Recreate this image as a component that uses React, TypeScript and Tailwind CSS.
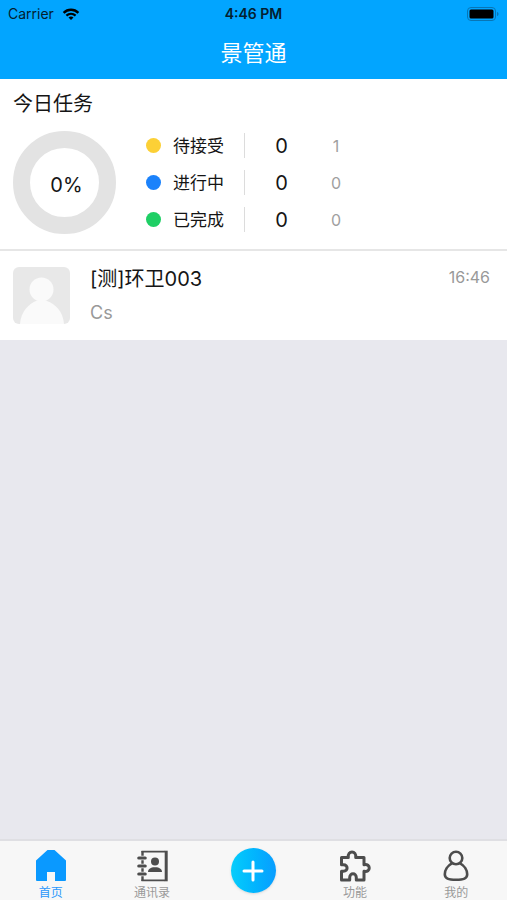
import type { ReactNode } from "react"

type taskType = {
    label: string
    dot: string
    count: number
    total: number
}

const tasks: taskType[] = [
    { label: "待接受", dot: "bg-[#fcd036]", count: 0, total: 1 },
    { label: "进行中", dot: "bg-[#1b82fb]", count: 0, total: 0 },
    { label: "已完成", dot: "bg-[#1fcf65]", count: 0, total: 0 },
]

const HomeIcon = () => (
    <svg viewBox="0 0 32 32" className="size-8" aria-hidden="true">
        <path d="M12.500 0h7L31 10.500V30q0 1-1 1H20v-9h-8v9H2q-1 0-1-1V10.500z" fill="#0a99ff" />
    </svg>
)

const ContactsIcon = () => (
    <svg viewBox="0 0 32 32" className="size-8" aria-hidden="true">
        <path d="M5.500 1.600H29M5.500 30.400H29" stroke="#4d4d4d" strokeWidth="1.800" />
        <path d="M30.200 .7v30.600" stroke="#4d4d4d" strokeWidth="3" />
        <path d="M6.500 1v30" stroke="#4d4d4d" strokeWidth="2.400" />
        <path d="M2.500 8h7M2.500 16h7M2.500 24h7" stroke="#f7f7f7" strokeWidth="4.600" />
        <path d="M2.800 8h6.400M2.800 16h6.400M2.800 24h6.400" stroke="#4d4d4d" strokeWidth="3.200" strokeLinecap="round" />
        <circle cx="19" cy="11.500" r="4" fill="#4d4d4d" />
        <path d="M12 22c0-3.200 2.700-4.200 5-4.800h4c2.300.6 5 1.600 5 4.800z" fill="#4d4d4d" />
    </svg>
)

const PuzzleIcon = () => (
    <svg viewBox="0 0 32 32" className="size-8" aria-hidden="true">
        <path
            d="M2.500 7.500h6.800c-1.200-7.400 8.600-7.400 7.400 0h8.300v7.200c7-1.600 7 8.200 0 6.600v8.700h-7.700v-2.500c0-5-6.600-5-6.600 0v2.500H2.500v-8.700h2c4.800 0 4.800-6.600 0-6.600h-2z"
            fill="none"
            stroke="#4d4d4d"
            strokeWidth="3"
            strokeLinejoin="round"
        />
    </svg>
)

const MineIcon = () => (
    <svg viewBox="0 0 32 32" className="size-8" aria-hidden="true">
        <circle cx="16" cy="8" r="6.300" fill="none" stroke="#4d4d4d" strokeWidth="2.600" />
        <path
            d="M12.300 13.200C7.300 15.700 4.800 20.500 4.800 24.300c0 4.300 3.500 5.500 11.200 5.500s11.200-1.200 11.200-5.500c0-3.800-2.500-8.600-7.500-11.100"
            fill="none"
            stroke="#4d4d4d"
            strokeWidth="2.600"
        />
    </svg>
)

const StatusBar = () => {
    return (
        <div className="grid h-7 grid-cols-3 items-center px-2 text-sm text-[#04202f]">
            <span className="flex items-center gap-2">
                Carrier
                <svg viewBox="0 0 18 13" className="h-3 w-[18px]" aria-label="Wi-Fi">
                    <path d="M1 5.200C5.500.8 12.500.8 17 5.200" fill="none" stroke="#000" strokeWidth="2.600" />
                    <path d="M4 8.300c2.900-2.700 7.100-2.700 10 0" fill="none" stroke="#000" strokeWidth="2.400" />
                    <path d="M6.300 10.300c1.600-1.300 3.800-1.300 5.400 0L9 13z" fill="#000" />
                </svg>
            </span>
            <span className="text-center text-sm font-semibold">4:46 PM</span>
            <svg viewBox="0 0 32 14" className="h-[14px] w-8 justify-self-end" aria-label="Battery">
                <rect x=".5" y=".5" width="28" height="13" rx="3.500" fill="none" stroke="#0875b5" />
                <rect x="2.500" y="2.500" width="24" height="9" rx="1.500" fill="#000" />
                <path d="M30 5c2 .5 2 3.500 0 4z" fill="#0875b5" />
            </svg>
        </div>
    )
}

const TaskSummary = () => {
    return (
        <section className="border-b-2 border-[#e6e6e6] bg-white px-[13px] pt-2 pb-[15px]">
            <h2 className="pt-px text-xl leading-8">今日任务</h2>
            <div className="mt-[11px] flex items-center gap-[30px]">
                <div className="relative flex size-[103px] items-center justify-center">
                    <svg viewBox="0 0 103 103" className="absolute inset-0" aria-hidden="true">
                        <circle cx="51.500" cy="51.500" r="43" fill="none" stroke="#e3e3e3" strokeWidth="17" />
                    </svg>
                    <span className="relative pt-1 pl-1 text-xl">0%</span>
                </div>
                <ul className="flex flex-col gap-3">
                    {tasks.map((task) => (
                        <li key={task.label} className="flex h-[25px] items-center">
                            <span className={`size-[15px] rounded-full ${task.dot}`} />
                            <span className="w-[83px] pt-0.5 pl-3 text-[17px]">{task.label}</span>
                            <span className="h-[25px] w-px bg-[#dcdcdc]" />
                            <span className="w-[73px] text-center text-xl">{task.count}</span>
                            <span className="w-9 pt-px text-center text-base text-[#a0a0a0]">{task.total}</span>
                        </li>
                    ))}
                </ul>
            </div>
        </section>
    )
}

const MessageItem = () => {
    return (
        <a href="#message" className="flex bg-white px-[13px] py-4">
            <svg viewBox="0 0 57 57" className="size-[57px] rounded-md bg-[#e8e8e8]" aria-hidden="true">
                <circle cx="28.500" cy="22.500" r="12" fill="#fafafa" />
                <path d="M7 57c1-13 9-20 16-23h11c8 3 16 10 17 23z" fill="#fafafa" />
            </svg>
            <div className="ml-5 grow">
                <div className="text-xl leading-6">[测]环卫003</div>
                <div className="mt-3 text-lg leading-5 text-[#999]">Cs</div>
            </div>
            <time className="pr-1 text-base leading-5 text-[#999]">16:46</time>
        </a>
    )
}

const Tab = ({ label, icon, active }: { label: string; icon: ReactNode; active?: boolean }) => {
    return (
        <a
            href="#tab"
            className={`flex flex-col items-center gap-px pt-[9px] text-xs leading-5 ${active ? "text-[#2d98fb]" : "text-[#999]"}`}
        >
            {icon}
            {label}
        </a>
    )
}

const App = () => {
    return (
        <div className="flex min-h-screen flex-col bg-[#e8e8ee] font-[Inter,'Noto_Sans_CJK_SC',sans-serif] text-[#151515]">
            <header className="bg-[#02a5ff]">
                <StatusBar />
                <h1 className="pt-[9px] pb-[10px] text-center text-[22px] leading-8 text-white">景管通</h1>
            </header>
            <main className="grow">
                <TaskSummary />
                <MessageItem />
            </main>
            <nav className="grid h-[61px] grid-cols-5 border-t-2 border-[#dfdfe3] bg-[#f7f7f7]">
                <Tab label="首页" icon={<HomeIcon />} active />
                <Tab label="通讯录" icon={<ContactsIcon />} />
                <button aria-label="新建" className="flex justify-center pt-[7px]">
                    <span className="flex size-[45px] items-center justify-center rounded-full bg-linear-to-r from-[#08cdfb] to-[#0a9dff] shadow-sm">
                        <svg viewBox="0 0 22 22" className="size-[22px]" aria-hidden="true">
                            <path d="M11 2v18M2 11h18" stroke="#fff" strokeWidth="3" strokeLinecap="round" />
                        </svg>
                    </span>
                </button>
                <Tab label="功能" icon={<PuzzleIcon />} />
                <Tab label="我的" icon={<MineIcon />} />
            </nav>
        </div>
    )
}

export default App
